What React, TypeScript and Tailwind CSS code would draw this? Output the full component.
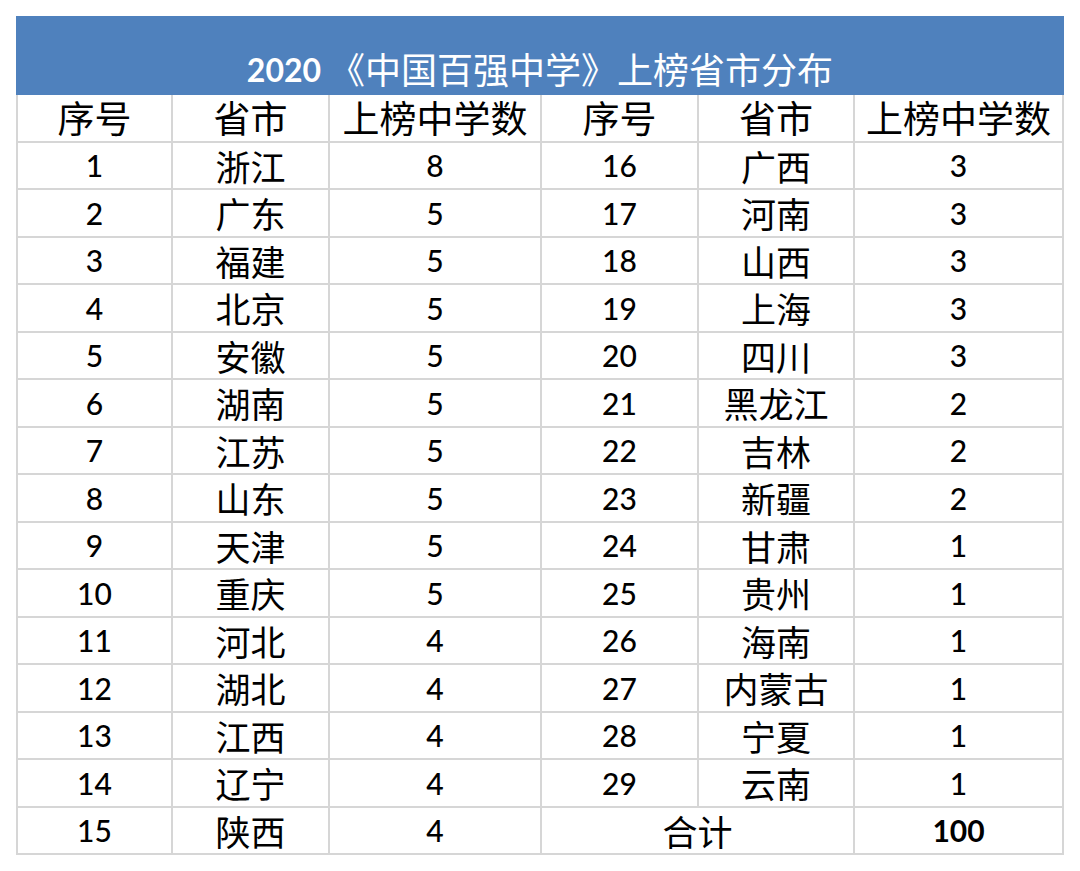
const rows: [number, string, number, number | null, string, number | null][] = [
  [1, '浙江', 8, 16, '广西', 3],
  [2, '广东', 5, 17, '河南', 3],
  [3, '福建', 5, 18, '山西', 3],
  [4, '北京', 5, 19, '上海', 3],
  [5, '安徽', 5, 20, '四川', 3],
  [6, '湖南', 5, 21, '黑龙江', 2],
  [7, '江苏', 5, 22, '吉林', 2],
  [8, '山东', 5, 23, '新疆', 2],
  [9, '天津', 5, 24, '甘肃', 1],
  [10, '重庆', 5, 25, '贵州', 1],
  [11, '河北', 4, 26, '海南', 1],
  [12, '湖北', 4, 27, '内蒙古', 1],
  [13, '江西', 4, 28, '宁夏', 1],
  [14, '辽宁', 4, 29, '云南', 1],
]

const cjk = "font-['Noto_Sans_CJK_SC',sans-serif]"
const num = "font-['Lato','Noto_Sans_CJK_SC',sans-serif]"

function Cell({ children, className = '' }: { children: React.ReactNode; className?: string }) {
  return (
    <div className={`bg-white flex items-center justify-center text-black leading-none ${className}`}>
      {children}
    </div>
  )
}

export default function App() {
  return (
    <div className="w-[1080px] h-[871px] bg-white pt-[16px] pl-[16px]">
      <div className="w-[1048px]">
        <div className="h-[79px] bg-[#4f81bd] flex items-end justify-center pb-[9px] text-white">
          <span className={`${num} font-bold text-[32px] leading-none mr-[8px]`}>2020</span>
          <span className={`${cjk} text-[36px] leading-none`}>《中国百强中学》上榜省市分布</span>
        </div>
        <div className="grid grid-cols-[153px_155px_210px_155px_154px_207px] auto-rows-[45.5px] gap-[2px] bg-[#d6d6d6] px-[2px] pb-[2px]">
          {['序号', '省市', '上榜中学数', '序号', '省市', '上榜中学数'].map((h, i) => (
            <Cell key={i} className={`${cjk} text-[37px]`}>{h}</Cell>
          ))}
          {rows.map((r) => (
            <>
              <Cell key={`a${r[0]}`} className={`${num} font-medium text-[30px]`}>{r[0]}</Cell>
              <Cell key={`b${r[0]}`} className={`${cjk} text-[35px]`}>{r[1]}</Cell>
              <Cell key={`c${r[0]}`} className={`${num} font-medium text-[30px]`}>{r[2]}</Cell>
              <Cell key={`d${r[0]}`} className={`${num} font-medium text-[30px]`}>{r[3]}</Cell>
              <Cell key={`e${r[0]}`} className={`${cjk} text-[35px]`}>{r[4]}</Cell>
              <Cell key={`f${r[0]}`} className={`${num} font-medium text-[30px]`}>{r[5]}</Cell>
            </>
          ))}
          <Cell className={`${num} font-medium text-[30px]`}>15</Cell>
          <Cell className={`${cjk} text-[35px]`}>陕西</Cell>
          <Cell className={`${num} font-medium text-[30px]`}>4</Cell>
          <Cell className={`${cjk} text-[35px] col-span-2`}>合计</Cell>
          <Cell className={`${num} text-[30px] font-bold`}>100</Cell>
        </div>
      </div>
    </div>
  )
}
